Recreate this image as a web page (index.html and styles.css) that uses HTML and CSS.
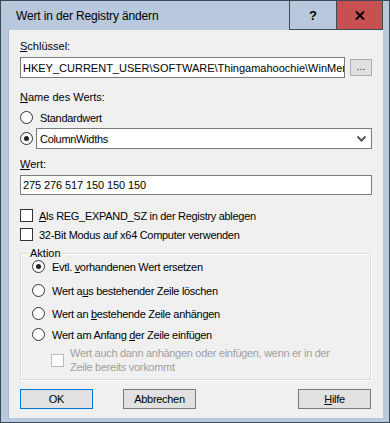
FILE: index.html
```html
<!DOCTYPE html>
<html lang="de">
<head>
    <meta charset="UTF-8">
    <title>Wert in der Registry ändern</title>
    <link rel="stylesheet" href="styles.css">
</head>
<body>
    <div class="window">
        <div class="titlebar">
            <span class="title">Wert in der Registry ändern</span>
            <div class="caption-btn help">?</div>
            <div class="caption-btn close">
                <svg width="10" height="9" viewBox="0 0 10 9"><path d="M1 0.5L9 8.5M9 0.5L1 8.5" stroke="#000" stroke-width="2"/></svg>
            </div>
        </div>
        <div class="client">
            <div class="label first"><u>S</u>chlüssel:</div>
            <div class="row key-row">
                <div class="textbox key">HKEY_CURRENT_USER\SOFTWARE\Thingamahoochie\WinMer</div>
                <div class="btn browse">...</div>
            </div>

            <div class="label name-label"><u>N</u>ame des Werts:</div>
            <div class="row option">
                <span class="radio"></span>
                <span>Standardwert</span>
            </div>
            <div class="row option combo-row">
                <span class="radio checked"></span>
                <div class="combo">
                    <span>ColumnWidths</span>
                    <svg width="9" height="6" viewBox="0 0 9 6"><path d="M0.5 0.5L4.5 4.5L8.5 0.5" fill="none" stroke="#555" stroke-width="2"/></svg>
                </div>
            </div>

            <div class="label value-label"><u>W</u>ert:</div>
            <div class="textbox value">275 276 517 150 150 150</div>

            <div class="row check first-check">
                <span class="box"></span>
                <span><u>A</u>ls REG_EXPAND_SZ in der Registry ablegen</span>
            </div>
            <div class="row check">
                <span class="box"></span>
                <span>32-Bit Modus auf x64 Computer verwenden</span>
            </div>

            <fieldset class="group">
                <legend>Aktion</legend>
                <div class="row option action a1">
                    <span class="radio checked"></span>
                    <span>Evtl. <u>v</u>orhandenen Wert ersetzen</span>
                </div>
                <div class="row option action a2">
                    <span class="radio"></span>
                    <span>Wert a<u>u</u>s bestehender Zeile löschen</span>
                </div>
                <div class="row option action a3">
                    <span class="radio"></span>
                    <span>Wert an <u>b</u>estehende Zeile anhängen</span>
                </div>
                <div class="row option action a4">
                    <span class="radio"></span>
                    <span>Wert am Anfang <u>d</u>er Zeile einfügen</span>
                </div>
                <div class="row disabled">
                    <span class="box"></span>
                    <span class="note">Wert auch dann anhängen oder einfügen, wenn er in der Zeile bereits vorkommt</span>
                </div>
            </fieldset>

            <div class="row buttons">
                <div class="btn default">OK</div>
                <div class="btn">Abbrechen</div>
                <div class="spacer"></div>
                <div class="btn"><u>H</u>ilfe</div>
            </div>
        </div>
    </div>
</body>
</html>
```

FILE: styles.css
```css
body {
    margin: 0;
    font-family: 'Liberation Sans', Arial, sans-serif;
    font-size: 11px;
    letter-spacing: -0.3px;
    color: #000;
    background: #fff;
}
.window {
    width: 388px;
    height: 421px;
    border: 1px solid #3f4a58;
    background: #b8c9dd;
    display: flex;
    flex-direction: column;
}
.titlebar {
    height: 29px;
    display: flex;
    align-items: stretch;
}
.title {
    flex: 1;
    font-size: 12px;
    letter-spacing: -0.15px;
    padding-left: 15px;
    line-height: 31px;
    color: #000;
}
.caption-btn {
    width: 46px;
    display: flex;
    align-items: center;
    justify-content: center;
    border-left: 1px solid #3f4a58;
    border-bottom: 1px solid #3f4a58;
    font-weight: bold;
    font-size: 13px;
    letter-spacing: 0;
}
.caption-btn.close {
    width: 45px;
    background: #c75050;
    margin-right: 6px;
    border-right: 1px solid #3f4a58;
}
.client {
    margin: 0 6px 4px 7px;
    flex: 1;
    background: #f0f0f0;
    border-left: 1px solid #a9b8c9;
    padding: 0 11px 0 11px;
    display: flex;
    flex-direction: column;
}
.row {
    display: flex;
    align-items: center;
}
.label {
    height: 13px;
    line-height: 13px;
    letter-spacing: 0;
}
.label.first {
    margin-top: 10px;
}
.key-row {
    margin-top: 4px;
    height: 21px;
}
.textbox {
    background: #fff;
    border: 1px solid #7a7a7a;
    box-sizing: border-box;
    padding-left: 2px;
    display: flex;
    align-items: center;
    white-space: nowrap;
    overflow: hidden;
}
.textbox.key {
    width: 326px;
    height: 21px;
    letter-spacing: 0;
}
.btn {
    box-sizing: border-box;
    border: 1px solid #7a7a7a;
    background: #e1e1e1;
    height: 20px;
    width: 73px;
    display: flex;
    align-items: center;
    justify-content: center;
}
.btn.browse {
    width: 22px;
    height: 17px;
    margin-left: 5px;
    border-color: #adadad;
    line-height: 10px;
    align-items: flex-start;
    padding-top: 1px;
    color: #333;
    letter-spacing: 0;
}
.btn.default {
    border: 1px solid #0078d7;
}
.name-label {
    margin-top: 13px;
}
.radio {
    width: 11px;
    height: 11px;
    border: 1px solid #333;
    border-radius: 50%;
    background: #fff;
    margin-right: 7px;
    display: flex;
    align-items: center;
    justify-content: center;
    flex-shrink: 0;
}
.radio.checked::after {
    content: "";
    width: 5px;
    height: 5px;
    border-radius: 50%;
    background: #222;
}
.name-label + .option {
    margin-top: 7px;
    height: 13px;
}
.combo-row {
    margin-top: 4px;
    height: 21px;
}
.combo {
    flex: 1;
    height: 21px;
    box-sizing: border-box;
    background: #fff;
    border: 1px solid #7a7a7a;
    display: flex;
    align-items: center;
    justify-content: space-between;
    padding: 0 5px 0 3px;
    margin-left: -4px;
}
.value-label {
    margin-top: 9px;
}
.textbox.value {
    margin-top: 4px;
    width: 352px;
    height: 20px;
    letter-spacing: -0.1px;
}
.check {
    height: 13px;
    margin-top: 6px;
}
.check.first-check {
    margin-top: 14px;
}
.box {
    width: 11px;
    height: 11px;
    border: 1px solid #333;
    background: #fff;
    margin-right: 6px;
    flex-shrink: 0;
}
.group {
    margin: 6px 0 0 0;
    width: 351px;
    height: 133px;
    box-sizing: border-box;
    border: 1px solid #dcdcdc;
    box-shadow: inset 1px 1px 0 #fff, 1px 1px 0 #fff;
    padding: 0 0 0 11px;
    display: flex;
    flex-direction: column;
}
.group legend {
    padding: 0 1px;
    margin-left: -3px;
    line-height: 12px;
    letter-spacing: 0;
}
.action {
    height: 13px;
}
.a1 {
    margin-top: 1px;
}
.a2 {
    margin-top: 11px;
}
.a3 {
    margin-top: 10px;
}
.a4 {
    margin-top: 8px;
}
.disabled {
    color: #a0a0a0;
    line-height: 14px;
    margin-top: 5px;
    margin-left: 19px;
}
.disabled .box {
    border-color: #bcbcbc;
}
.note {
    width: 272px;
}
.buttons {
    margin-top: 9px;
    width: 351px;
}
.spacer {
    flex: 1;
}
.buttons .btn:nth-child(2) {
    margin-left: 30px;
}
```
